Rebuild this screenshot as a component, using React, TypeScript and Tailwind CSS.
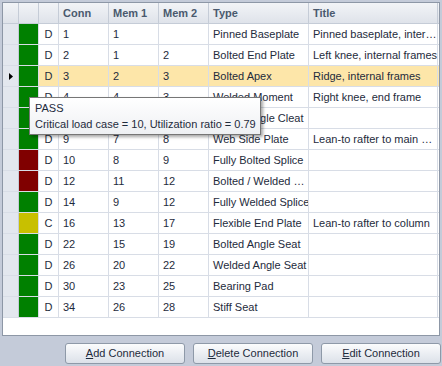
import React from 'react';

type Row = {
  kind: string;
  conn: string;
  mem1: string;
  mem2: string;
  type: string;
  title: string;
  status: 'pass' | 'fail' | 'warn';
  selected?: boolean;
};

const rows: Row[] = [
  { kind: 'D', conn: '1', mem1: '1', mem2: '', type: 'Pinned Baseplate', title: 'Pinned baseplate, inter…', status: 'pass' },
  { kind: 'D', conn: '2', mem1: '1', mem2: '2', type: 'Bolted End Plate', title: 'Left knee, internal frames', status: 'pass' },
  { kind: 'D', conn: '3', mem1: '2', mem2: '3', type: 'Bolted Apex', title: 'Ridge, internal frames', status: 'pass', selected: true },
  { kind: 'D', conn: '4', mem1: '4', mem2: '3', type: 'Welded Moment', title: 'Right knee, end frame', status: 'pass' },
  { kind: 'D', conn: '6', mem1: '5', mem2: '7', type: 'Bolted Angle Cleat', title: '', status: 'pass' },
  { kind: 'D', conn: '9', mem1: '7', mem2: '8', type: 'Web Side Plate', title: 'Lean-to rafter to main …', status: 'pass' },
  { kind: 'D', conn: '10', mem1: '8', mem2: '9', type: 'Fully Bolted Splice', title: '', status: 'fail' },
  { kind: 'D', conn: '12', mem1: '11', mem2: '12', type: 'Bolted / Welded …', title: '', status: 'fail' },
  { kind: 'D', conn: '14', mem1: '9', mem2: '12', type: 'Fully Welded Splice', title: '', status: 'pass' },
  { kind: 'C', conn: '16', mem1: '13', mem2: '17', type: 'Flexible End Plate', title: 'Lean-to rafter to column', status: 'warn' },
  { kind: 'D', conn: '22', mem1: '15', mem2: '19', type: 'Bolted Angle Seat', title: '', status: 'pass' },
  { kind: 'D', conn: '26', mem1: '20', mem2: '22', type: 'Welded Angle Seat', title: '', status: 'pass' },
  { kind: 'D', conn: '30', mem1: '23', mem2: '25', type: 'Bearing Pad', title: '', status: 'pass' },
  { kind: 'D', conn: '34', mem1: '26', mem2: '28', type: 'Stiff Seat', title: '', status: 'pass' },
];

const statusBg = {
  pass: 'bg-[#008000]',
  fail: 'bg-[#800000]',
  warn: 'bg-[#c8c000]',
};

const cell = 'h-full flex items-center px-[4px] whitespace-nowrap overflow-hidden border-r border-[#d8dde6]';

const AccelButton: React.FC<{ accel: string; rest: string }> = ({ accel, rest }) => (
  <button className="w-[120px] h-[21px] rounded-[3px] border border-[#8e99a8] bg-gradient-to-b from-[#fbfcfd] to-[#dce1e9] text-[11px] text-[#1e2b3c] flex items-center justify-center">
    <span className="underline">{accel}</span>
    {rest}
  </button>
);

export default function App() {
  return (
    <div
      className="w-[442px] h-[366px] bg-[#c4cbd9] pt-[2px] pl-[2px] overflow-hidden text-[#1e2b3c]"
      style={{ fontFamily: '"Liberation Sans", Arial, sans-serif' }}
    >
      {/* Grid */}
      <div className="relative w-[438px] h-[334px] border border-[#8d97a6] bg-white text-[11px]">
        {/* Header */}
        <div className="flex h-[21px] border-b border-[#c5ccd7] bg-gradient-to-b from-[#f2f4f7] to-[#dfe3ea] font-bold text-[#4a5a6e]">
          <div className="w-[16px] h-full border-r border-[#c5ccd7]" />
          <div className="w-[20px] h-full border-r border-[#c5ccd7]" />
          <div className="w-[20px] h-full border-r border-[#c5ccd7]" />
          <div className="w-[50px] h-full border-r border-[#c5ccd7] flex items-center px-[4px]">Conn</div>
          <div className="w-[50px] h-full border-r border-[#c5ccd7] flex items-center px-[4px]">Mem 1</div>
          <div className="w-[50px] h-full border-r border-[#c5ccd7] flex items-center px-[4px]">Mem 2</div>
          <div className="w-[100px] h-full border-r border-[#c5ccd7] flex items-center px-[4px]">Type</div>
          <div className="w-[129px] h-full border-r border-[#c5ccd7] flex items-center px-[4px]">Title</div>
        </div>

        {/* Rows */}
        {rows.map((r, i) => (
          <div key={i} className="flex h-[21px] border-b border-[#d8dde6]">
            <div className="w-[16px] h-full bg-[#e3e7ee] border-r border-[#c5ccd7] flex items-center justify-center">
              {r.selected && (
                <svg width="4" height="7" viewBox="0 0 4 7">
                  <path d="M0 0 L4 3.5 L0 7 Z" fill="#000" />
                </svg>
              )}
            </div>
            <div className={`w-[20px] h-full border-r border-[#d8dde6] ${statusBg[r.status]}`} />
            <div className={`flex flex-1 h-full ${r.selected ? 'bg-[#fde6a9]' : ''}`}>
              <div className={`w-[20px] justify-center ${cell}`}>{r.kind}</div>
              <div className={`w-[50px] ${cell}`}>{r.conn}</div>
              <div className={`w-[50px] ${cell}`}>{r.mem1}</div>
              <div className={`w-[50px] ${cell}`}>{r.mem2}</div>
              <div className={`w-[100px] ${cell}`}>{r.type}</div>
              <div className={`w-[129px] ${cell}`}>{r.title}</div>
            </div>
          </div>
        ))}

        {/* Tooltip */}
        <div className="absolute left-[26px] top-[94px] w-[232px] h-[38px] border border-[#767676] bg-gradient-to-b from-white to-[#eef0f3] shadow-[2px_2px_3px_rgba(0,0,0,0.35)] px-[5px] pt-[2px] leading-[16px] whitespace-nowrap">
          <div>PASS</div>
          <div>Critical load case = 10, Utilization ratio = 0.79</div>
        </div>
      </div>

      {/* Buttons */}
      <div className="flex justify-end gap-[8px] mt-[7px] pr-[1px]">
        <AccelButton accel="A" rest="dd Connection" />
        <AccelButton accel="D" rest="elete Connection" />
        <AccelButton accel="E" rest="dit Connection" />
      </div>
    </div>
  );
}
